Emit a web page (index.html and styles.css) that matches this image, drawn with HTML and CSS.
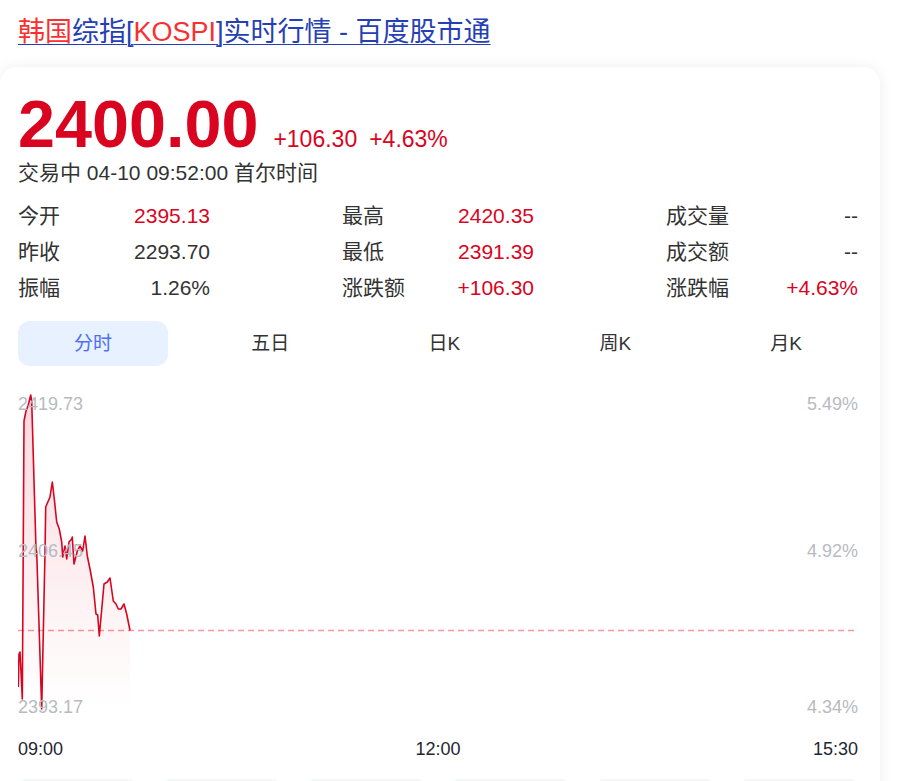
FILE: index.html
```html
<!DOCTYPE html>
<html lang="zh-CN">
<head>
<meta charset="utf-8">
<title>韩国综指[KOSPI]实时行情 - 百度股市通</title>
<link rel="stylesheet" href="styles.css">
</head>
<body>
<div class="page">
  <h1 class="title"><a href="#"><em>韩国</em>综指[<em>KOSPI</em>]实时行情 - 百度股市通</a></h1>
  <div class="card">
    <div class="quote">
      <span class="price">2400.00</span>
      <span class="change">+106.30</span>
      <span class="change">+4.63%</span>
    </div>
    <div class="status">交易中 04-10 09:52:00 首尔时间</div>
    <div class="stats">
      <div class="col">
        <div class="row"><span class="lbl">今开</span><span class="val up">2395.13</span></div>
        <div class="row"><span class="lbl">昨收</span><span class="val">2293.70</span></div>
        <div class="row"><span class="lbl">振幅</span><span class="val">1.26%</span></div>
      </div>
      <div class="col">
        <div class="row"><span class="lbl">最高</span><span class="val up">2420.35</span></div>
        <div class="row"><span class="lbl">最低</span><span class="val up">2391.39</span></div>
        <div class="row"><span class="lbl">涨跌额</span><span class="val up">+106.30</span></div>
      </div>
      <div class="col">
        <div class="row"><span class="lbl">成交量</span><span class="val">--</span></div>
        <div class="row"><span class="lbl">成交额</span><span class="val">--</span></div>
        <div class="row"><span class="lbl">涨跌幅</span><span class="val up">+4.63%</span></div>
      </div>
    </div>
    <div class="tabs">
      <span class="tab active">分时</span>
      <span class="tab">五日</span>
      <span class="tab">日K</span>
      <span class="tab">周K</span>
      <span class="tab">月K</span>
    </div>
    <div class="chart">
      <svg class="plot" width="840" height="330" viewBox="0 0 840 330" xmlns="http://www.w3.org/2000/svg">
        <defs>
          <linearGradient id="fillg" x1="0" y1="0" x2="0" y2="1">
            <stop offset="0" stop-color="#e0102e" stop-opacity="0.16"/>
            <stop offset="1" stop-color="#e0102e" stop-opacity="0"/>
          </linearGradient>
        </defs>
        <line x1="0" y1="243.5" x2="840" y2="243.5" stroke="#f8979d" stroke-width="1.5" stroke-dasharray="6 4"/>
        <path fill="url(#fillg)" d="M0.3 300 L1 267 L2 265 L3 285 L4.3 312 L5.3 152 L6 34 L8 24 L10 19 L12.7 8 L13.7 14 L18 162 L18.7 165 L23.7 322 L27 165 L27.7 120 L32 110 L34.3 95 L36.3 112 L38.7 135 L41.3 142 L43.7 155 L44.7 170 L47 159 L48.7 172 L51 155 L53.7 152 L54.3 150 L56 177 L59.3 164 L62 159 L64.7 164 L67 149 L69.3 169 L72 182 L75.3 200 L78 227 L79.7 228 L81.3 249 L86 197 L89.3 195 L92 191 L95.3 214 L98 217 L100.3 222 L103 222 L106 217 L108.7 227 L112 243.5 L112 318 L0.3 318 Z"/>
        <path fill="none" stroke="#d9041f" stroke-width="1.6" stroke-linejoin="round" d="M0.3 300 L1 267 L2 265 L3 285 L4.3 312 L5.3 152 L6 34 L8 24 L10 19 L12.7 8 L13.7 14 L18 162 L18.7 165 L23.7 322 L27 165 L27.7 120 L32 110 L34.3 95 L36.3 112 L38.7 135 L41.3 142 L43.7 155 L44.7 170 L47 159 L48.7 172 L51 155 L53.7 152 L54.3 150 L56 177 L59.3 164 L62 159 L64.7 164 L67 149 L69.3 169 L72 182 L75.3 200 L78 227 L79.7 228 L81.3 249 L86 197 L89.3 195 L92 191 L95.3 214 L98 217 L100.3 222 L103 222 L106 217 L108.7 227 L112 243.5"/>
      </svg>
      <span class="axis-l a-top">2419.73</span>
      <span class="axis-l a-mid">2406.45</span>
      <span class="axis-l a-bot">2393.17</span>
      <span class="axis-r a-top">5.49%</span>
      <span class="axis-r a-mid">4.92%</span>
      <span class="axis-r a-bot">4.34%</span>
    </div>
    <div class="times">
      <span>09:00</span>
      <span>12:00</span>
      <span>15:30</span>
    </div>
    <div class="actions">
      <span class="btn"></span>
      <span class="btn"></span>
      <span class="btn"></span>
      <span class="btn"></span>
      <span class="btn"></span>
      <span class="btn"></span>
    </div>
  </div>
</div>
</body>
</html>
```
FILE: styles.css
```css
html, body {
  margin: 0;
  padding: 0;
  background: #fff;
  font-family: Arial, "Liberation Sans", "Noto Sans CJK SC", sans-serif;
  color: #333;
  overflow: hidden;
}

.page {
  width: 880px;
}

.title {
  margin: 0;
  padding: 13px 18px 0;
  font-size: 27px;
  font-weight: normal;
  line-height: 38px;
  height: 54px;
  white-space: nowrap;
}

.title a {
  color: #2440b3;
  text-decoration: underline;
  text-underline-offset: 3px;
  text-decoration-thickness: 1px;
}

.title em {
  font-style: normal;
  color: #f73131;
}

.card {
  border-radius: 16px;
  box-shadow: 0 0 14px rgba(0, 0, 0, 0.07);
  padding: 24px 22px 20px 18px;
  background: #fff;
}

.quote {
  display: flex;
  align-items: baseline;
  height: 64px;
}

.price {
  font-family: "Liberation Sans", Arial, sans-serif;
  font-weight: bold;
  font-size: 66.5px;
  line-height: 66px;
  color: #d9041f;
  margin-right: 15px;
}

.change {
  font-size: 23px;
  color: #d9041f;
  margin-right: 12px;
}

.status {
  font-size: 21px;
  line-height: 26px;
  margin-top: 5px;
  color: #333;
}

.stats {
  display: flex;
  justify-content: space-between;
  margin-top: 12px;
}

.col {
  width: 192px;
}

.row {
  display: flex;
  justify-content: space-between;
  height: 36px;
  line-height: 36px;
  font-size: 21px;
}

.lbl {
  color: #333;
}

.val {
  color: #333;
}

.val.up {
  color: #d9041f;
}

.tabs {
  display: flex;
  justify-content: space-between;
  margin-top: 15px;
}

.tab {
  padding: 0 56px;
  height: 45px;
  line-height: 45px;
  font-size: 19px;
  color: #333;
  border-radius: 12px;
}

.tab.active {
  background: #e8f1ff;
  color: #4e6ef2;
}

.chart {
  position: relative;
  height: 330px;
  margin-top: 21px;
}

.plot {
  display: block;
}

.axis-l,
.axis-r {
  position: absolute;
  font-size: 18px;
  line-height: 20px;
  color: #b7bac1;
}

.axis-l {
  left: 0;
}

.axis-r {
  right: 0;
}

.a-top {
  top: 7px;
}

.a-mid {
  top: 154px;
}

.a-bot {
  top: 310px;
}

.times {
  display: flex;
  justify-content: space-between;
  font-size: 18px;
  line-height: 24px;
  color: #1f2533;
  margin-top: 20px;
}

.actions {
  display: flex;
  justify-content: space-between;
  margin-top: 18px;
}

.btn {
  width: 118px;
  height: 40px;
  border-radius: 8px;
  background: #f5f6f8;
}
```
